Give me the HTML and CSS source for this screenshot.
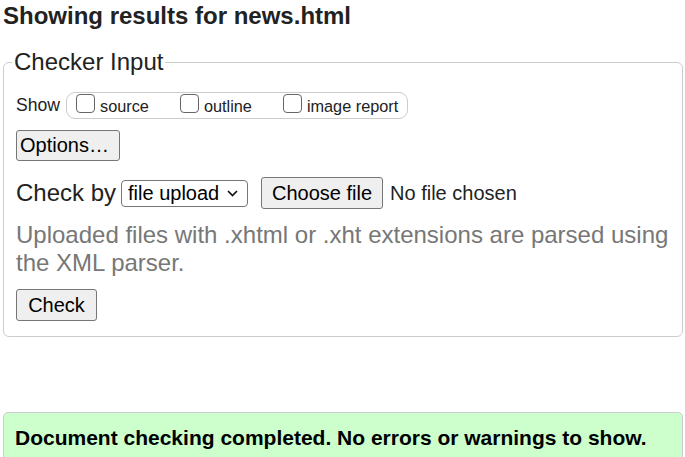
FILE: index.html
```html
<!DOCTYPE html>
<html>
<head>
<meta charset="utf-8">
<link rel="stylesheet" href="styles.css">
</head>
<body>
<h2 class="title">Showing results for news.html</h2>
<form class="checker">
  <fieldset class="box">
    <legend class="legend">Checker Input</legend>
    <div class="show-row">
      <span class="show-label">Show</span>
      <div class="pill">
        <label class="opt"><input type="checkbox" class="cb"><span>source</span></label>
        <label class="opt"><input type="checkbox" class="cb"><span>outline</span></label>
        <label class="opt"><input type="checkbox" class="cb"><span>image report</span></label>
      </div>
    </div>
    <div class="row-options"><button type="button" class="btn btn-options">Options…</button></div>
    <div class="row-check">
      <span class="checkby">Check by</span>
      <span class="select">file upload<svg class="chev" width="11" height="7" viewBox="0 0 11 7"><path d="M1 1 L5.5 5.5 L10 1" fill="none" stroke="#111" stroke-width="1.7"/></svg></span>
      <button type="button" class="btn btn-file">Choose file</button>
      <span class="nofile">No file chosen</span>
    </div>
    <p class="note">Uploaded files with .xhtml or .xht extensions are parsed using the XML parser.</p>
    <button type="button" class="btn btn-check">Check</button>
  </fieldset>
</form>
<div class="result">Document checking completed. No errors or warnings to show.</div>
</body>
</html>
```
FILE: styles.css
```css
html, body { margin: 0; padding: 0; background: #fff; }
body {
  font-family: "Liberation Sans", Arial, sans-serif;
  color: #222;
  padding: 0 0 0 3px;
  width: 680px;
}
.title {
  margin: 0;
  padding-top: 2px;
  font-size: 24px;
  font-weight: bold;
  line-height: 28px;
  color: #222;
}
.checker { margin: 0; }
.box {
  margin: 18px 0 0 0;
  border: 1px solid #ccc;
  border-radius: 6px;
  padding: 0 0 15px 12px;
  min-width: 0;
}
.legend {
  font-size: 24px;
  line-height: 28px;
  padding: 0 2px;
  margin-left: -4px;
  color: #222;
}
.show-row {
  display: flex;
  align-items: center;
  margin-top: 16px;
}
.show-label { font-size: 17.6px; margin-right: 6px; }
.pill {
  display: flex;
  align-items: flex-start;
  border: 1px solid #ccc;
  border-radius: 9px;
  height: 27px;
  padding: 0 9px 0 9px;
  box-sizing: border-box;
}
.opt {
  display: flex;
  align-items: flex-start;
  font-size: 16.3px;
  margin-right: 31px;
}
.opt:last-child { margin-right: 0; }
.opt span { margin-top: 4px; line-height: 19px; }
.cb {
  -webkit-appearance: none;
  appearance: none;
  width: 19px;
  height: 19px;
  margin: 1px 5px 0 0;
  border: 1px solid #666;
  border-radius: 4px;
  background: #fff;
  box-sizing: border-box;
}
.btn {
  font-family: "Liberation Sans", Arial, sans-serif;
  font-size: 20px;
  color: #000;
  background: #efefef;
  border: 1px solid #767676;
  border-radius: 3px;
  padding: 0;
  margin: 0;
  box-sizing: border-box;
}
.row-options { margin-top: 11px; display: flex; }
.btn-options { height: 31px; width: 104px; text-align: left; padding-left: 3px; }
.row-check {
  display: flex;
  align-items: center;
  margin-top: 16px;
  height: 32px;
}
.checkby { font-size: 24px; margin-right: 5px; color: #222; }
.select {
  display: flex;
  align-items: center;
  justify-content: space-between;
  box-sizing: border-box;
  width: 127px;
  height: 27px;
  border: 1px solid #767676;
  border-radius: 4px;
  font-size: 20px;
  padding: 0 9px 0 6px;
  color: #000;
  margin-right: 13px;
}
.chev { display: block; }
.btn-file { height: 32px; width: 122px; margin-right: 7px; }
.nofile { font-size: 20px; color: #222; }
.note {
  margin: 12px 0 0 0;
  font-size: 24px;
  line-height: 28px;
  color: #777;
}
.btn-check { margin-top: 12px; height: 32px; width: 81px; display: block; }
.result {
  margin-top: 75px;
  background: #ccffcc;
  border: 1px solid #ccc;
  border-radius: 5px;
  padding: 13px 11px 10px;
  font-size: 21px;
  font-weight: bold;
  color: #000;
  line-height: 24px;
}
```
